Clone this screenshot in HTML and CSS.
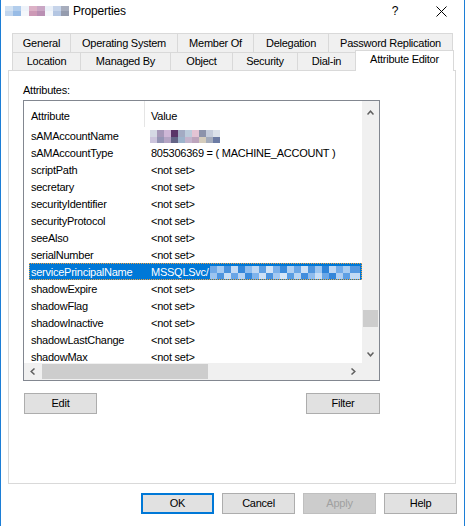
FILE: index.html
```html
<!DOCTYPE html>
<html>
<head>
<meta charset="utf-8">
<title>Properties</title>
<link rel="stylesheet" href="styles.css">
</head>
<body>
<div class="window">
  <div class="titlebar">
    <span class="title-blur"></span>
    <span class="title">Properties</span>
    <div class="tb-btns">
      <span class="tb-btn">?</span>
      <span class="tb-btn"><svg width="11" height="11" viewBox="0 0 11 11"><path d="M0.5 0.5 L10.5 10.5 M10.5 0.5 L0.5 10.5" stroke="#000" stroke-width="1" fill="none"/></svg></span>
    </div>
  </div>

  <div class="tabs">
    <div class="tab-row row1">
      <div class="tab t-general">General</div>
      <div class="tab t-os">Operating System</div>
      <div class="tab t-member">Member Of</div>
      <div class="tab t-deleg">Delegation</div>
      <div class="tab t-pwd">Password Replication</div>
    </div>
    <div class="tab-row row2">
      <div class="tab t-location">Location</div>
      <div class="tab t-managed">Managed By</div>
      <div class="tab t-object">Object</div>
      <div class="tab t-security">Security</div>
      <div class="tab t-dialin">Dial-in</div>
      <div class="tab t-attr selected">Attribute Editor</div>
    </div>
  </div>

  <div class="panel">
    <div class="label">Attributes:</div>
    <div class="listview">
      <div class="lv-main">
        <div class="lv-header">
          <div class="h1">Attribute</div>
          <div class="h2">Value</div>
        </div>
        <div class="lv-rows">
          <div class="lv-row"><span class="c1">sAMAccountName</span><span class="c2"><span class="blur-sam"></span></span></div>
          <div class="lv-row"><span class="c1">sAMAccountType</span><span class="c2">805306369 = ( MACHINE_ACCOUNT )</span></div>
          <div class="lv-row"><span class="c1">scriptPath</span><span class="c2">&lt;not set&gt;</span></div>
          <div class="lv-row"><span class="c1">secretary</span><span class="c2">&lt;not set&gt;</span></div>
          <div class="lv-row"><span class="c1">securityIdentifier</span><span class="c2">&lt;not set&gt;</span></div>
          <div class="lv-row"><span class="c1">securityProtocol</span><span class="c2">&lt;not set&gt;</span></div>
          <div class="lv-row"><span class="c1">seeAlso</span><span class="c2">&lt;not set&gt;</span></div>
          <div class="lv-row"><span class="c1">serialNumber</span><span class="c2">&lt;not set&gt;</span></div>
          <div class="lv-row selected"><span class="c1">servicePrincipalName</span><span class="c2">MSSQLSvc/<span class="blur-spn"></span></span></div>
          <div class="lv-row"><span class="c1">shadowExpire</span><span class="c2">&lt;not set&gt;</span></div>
          <div class="lv-row"><span class="c1">shadowFlag</span><span class="c2">&lt;not set&gt;</span></div>
          <div class="lv-row"><span class="c1">shadowInactive</span><span class="c2">&lt;not set&gt;</span></div>
          <div class="lv-row"><span class="c1">shadowLastChange</span><span class="c2">&lt;not set&gt;</span></div>
          <div class="lv-row"><span class="c1">shadowMax</span><span class="c2">&lt;not set&gt;</span></div>
        </div>
      </div>
      <div class="vscroll">
        <div class="sb-btn up"><svg width="7" height="5" viewBox="0 0 7 5"><polyline points="0.5,4.5 3.5,1.2 6.5,4.5" fill="none" stroke="#606060" stroke-width="1.5"/></svg></div>
        <div class="vtrack"><div class="vthumb"></div></div>
        <div class="sb-btn"><svg width="7" height="5" viewBox="0 0 7 5"><polyline points="0.5,0.5 3.5,3.8 6.5,0.5" fill="none" stroke="#606060" stroke-width="1.5"/></svg></div>
      </div>
      <div class="hscroll">
        <div class="sb-btn hbtn"><svg width="5" height="7" viewBox="0 0 5 7"><polyline points="4.5,0.5 1.2,3.5 4.5,6.5" fill="none" stroke="#606060" stroke-width="1.5"/></svg></div>
        <div class="htrack"><div class="hthumb"></div></div>
        <div class="sb-btn hbtn"><svg width="5" height="7" viewBox="0 0 5 7"><polyline points="0.5,0.5 3.8,3.5 0.5,6.5" fill="none" stroke="#606060" stroke-width="1.5"/></svg></div>
      </div>
      <div class="corner"></div>
    </div>
    <div class="panel-buttons">
      <button class="btn btn-edit">Edit</button>
      <button class="btn btn-filter">Filter</button>
    </div>
  </div>

  <div class="dialog-buttons">
    <button class="btn default">OK</button>
    <button class="btn">Cancel</button>
    <button class="btn disabled">Apply</button>
    <button class="btn">Help</button>
  </div>
</div>
</body>
</html>
```

FILE: styles.css
```css
html, body {
  margin: 0;
  padding: 0;
  background: #ffffff;
}

body {
  font-family: "Liberation Sans", Arial, sans-serif;
  font-size: 11px;
  letter-spacing: -0.25px;
  color: #000000;
}

.window {
  width: 465px;
  height: 526px;
  box-sizing: border-box;
  border-left: 1px solid #1c7ed6;
  border-right: 1px solid #1c7ed6;
  background: #ffffff;
  overflow: hidden;
}

/* ---------- title bar ---------- */
.titlebar {
  height: 33px;
  display: flex;
  align-items: flex-start;
}

.title-blur {
  margin: 6px 0 0 4px;
  width: 64px;
  height: 10px;
  flex-shrink: 0;
  background:
    linear-gradient(90deg, #d3e2f2 0 8px, #b2cdec 8px 16px, #eef3fa 16px 24px, #dcb1c6 24px 32px, #c9a6c4 32px 40px, #eaf0f8 40px 48px, #c6d4ea 48px 56px, #a7adbd 56px 64px) top / 100% 5px no-repeat,
    linear-gradient(90deg, #c2d6ee 0 8px, #98bce6 8px 16px, #f4f7fb 16px 24px, #cd99b6 24px 32px, #b98fb3 32px 40px, #f3f6fa 40px 48px, #b4c6e2 48px 56px, #959cae 56px 64px) bottom / 100% 5px no-repeat;
}

.title {
  margin-left: 4px;
  padding-top: 4px;
  font-size: 12px;
  line-height: 14px;
  letter-spacing: -0.2px;
  white-space: nowrap;
}

.tb-btns {
  margin-left: auto;
  display: flex;
}

.tb-btn {
  width: 46px;
  height: 22px;
  display: flex;
  align-items: center;
  justify-content: center;
  font-size: 12px;
  letter-spacing: 0;
}

/* ---------- tabs ---------- */
.tabs {
  margin-left: 11px;
}

.tab-row {
  display: flex;
  align-items: flex-start;
}

.tab {
  box-sizing: border-box;
  border: 1px solid #d9d9d9;
  border-bottom: none;
  background: #f0f0f0;
  text-align: center;
  white-space: nowrap;
  margin-left: -1px;
  line-height: 17px;
}

.tab:first-child {
  margin-left: 0;
}

.row1 .tab {
  height: 19px;
  padding-top: 1px;
}

.row2 .tab {
  height: 18px;
}

.row2 .tab.selected {
  height: 21px;
  margin-top: -2px;
  margin-bottom: -1px;
  background: #ffffff;
  position: relative;
  z-index: 1;
}

.t-general { width: 59px; }
.t-os { width: 108px; }
.t-member { width: 77px; }
.t-deleg { width: 76px; }
.t-pwd { width: 125px; }

.t-location { width: 69px; }
.t-managed { width: 91px; }
.t-object { width: 63px; }
.t-security { width: 66px; }
.t-dialin { width: 59px; }
.t-attr { width: 99px; }

/* ---------- panel ---------- */
.panel {
  margin-left: 7px;
  width: 448px;
  height: 414px;
  box-sizing: border-box;
  border: 1px solid #d9d9d9;
  background: #ffffff;
  padding: 13px 0 0 14px;
}

.label {
  line-height: 13px;
  height: 13px;
}

.listview {
  margin-top: 3px;
  width: 357px;
  height: 281px;
  box-sizing: border-box;
  border: 1px solid #828790;
  display: grid;
  grid-template-columns: 338px 17px;
  grid-template-rows: 262px 17px;
}

.lv-main {
  overflow: hidden;
  background: #ffffff;
}

.lv-header {
  height: 26px;
  display: flex;
}

.h1 {
  width: 121px;
  box-sizing: border-box;
  border-right: 1px solid #e5e5e5;
  padding: 9px 0 0 7px;
  line-height: 13px;
}

.h2 {
  padding: 9px 0 0 6px;
  line-height: 13px;
}

.lv-rows {
  padding-left: 5px;
}

.lv-row {
  width: 333px;
  height: 17px;
  box-sizing: border-box;
  padding: 1px 0 0 1px;
  display: flex;
  line-height: 16px;
  white-space: nowrap;
  overflow: hidden;
}

.lv-row .c1 {
  width: 119px;
  box-sizing: border-box;
  padding-left: 1px;
  flex-shrink: 0;
}

.lv-row .c2 {
  padding-left: 2px;
  display: flex;
  align-items: center;
}

.lv-row.selected {
  background: #0078d7;
  color: #ffffff;
  outline: 1px dotted #f0a040;
  outline-offset: -1px;
}

.blur-sam {
  display: block;
  width: 70px;
  height: 13px;
  margin-left: -1px;
  background:
    linear-gradient(90deg, #d4d8e4 0 7px, #a597b8 7px 14px, #cdb6d6 14px 21px, #5a3468 21px 28px, #a3abc3 28px 35px, #bccbdb 35px 42px, #e3c4d4 42px 49px, #8c93ab 49px 56px, #c4ccdb 56px 63px, #dbe2ea 63px 70px) top / 100% 7px no-repeat,
    linear-gradient(90deg, #ccc4dc 0 7px, #9494b4 7px 14px, #b4a4c4 14px 21px, #646486 21px 28px, #9db3cb 28px 35px, #c4b4cc 35px 42px, #bca4bc 42px 49px, #d4ccbc 49px 56px, #a4acbc 56px 63px, #6c7ca4 63px 70px) bottom / 100% 6px no-repeat;
}

.blur-spn {
  display: block;
  width: 150px;
  height: 13px;
  margin-left: 1px;
  flex-shrink: 0;
  background:
    linear-gradient(90deg, #6fa9e8 0 7px, #a6cbf2 7px 14px, #4a92dd 14px 21px, #c4dbf5 21px 28px, #3487da 28px 35px, #8fbdee 35px 42px, #bfd8f4 42px 49px, #5d9fe3 49px 56px, #d3e4f7 56px 63px, #7ab0ea 63px 70px, #3b8bdb 70px 77px, #b1d0f2 77px 84px, #6aa6e6 84px 91px, #cfe1f6 91px 98px, #4f95de 98px 105px, #9cc5f0 105px 112px, #2f84d9 112px 119px, #c0d8f4 119px 126px, #73ace9 126px 133px, #a9cdf2 133px 140px, #5598e0 140px 150px) top / 100% 7px no-repeat,
    linear-gradient(90deg, #9cc4f0 0 7px, #4f95de 7px 14px, #c8def5 14px 21px, #69a5e6 21px 28px, #b6d3f3 28px 35px, #3a8adb 35px 42px, #7fb3eb 42px 49px, #cde0f6 49px 56px, #4c93dd 56px 63px, #a4c9f1 63px 70px, #d6e6f8 70px 77px, #5a9de2 77px 84px, #b9d5f3 84px 91px, #438ddc 91px 98px, #8ebbed 98px 105px, #c7ddf5 105px 112px, #6ba7e7 112px 119px, #3385d9 119px 126px, #b0cff2 126px 133px, #5e9fe3 133px 140px, #c3daf4 140px 150px) bottom / 100% 6px no-repeat;
}

/* ---------- scrollbars ---------- */
.vscroll {
  background: #f0f0f0;
  display: flex;
  flex-direction: column;
}

.sb-btn {
  height: 17px;
  flex-shrink: 0;
  display: flex;
  align-items: center;
  justify-content: center;
}

.sb-btn svg {
  display: block;
}

.sb-btn.up {
  box-sizing: border-box;
  padding-top: 5px;
}

.vtrack {
  flex: 1;
}

.vthumb {
  margin: 192px 0 0 1px;
  width: 15px;
  height: 17px;
  background: #cdcdcd;
}

.hscroll {
  background: #f0f0f0;
  display: flex;
}

.hbtn {
  width: 17px;
}

.htrack {
  flex: 1;
}

.hthumb {
  margin: 1px 0 0 1px;
  width: 166px;
  height: 15px;
  background: #cdcdcd;
}

.corner {
  background: #f0f0f0;
}

/* ---------- buttons ---------- */
.btn {
  box-sizing: border-box;
  height: 21px;
  width: 73px;
  padding: 0;
  margin: 0;
  border: 1px solid #adadad;
  background: #e1e1e1;
  font-family: inherit;
  font-size: 11px;
  letter-spacing: -0.25px;
  color: #000000;
  text-align: center;
  line-height: 19px;
}

.panel-buttons {
  margin-top: 12px;
  width: 357px;
  display: flex;
  justify-content: space-between;
}

.btn-edit {
  margin-left: 1px;
}

.btn-filter {
  width: 74px;
}

.dialog-buttons {
  margin-top: 9px;
  padding-right: 7px;
  display: flex;
  justify-content: flex-end;
  gap: 8px;
}

.btn.default {
  border: 2px solid #0078d7;
  line-height: 17px;
}

.btn.disabled {
  background: #cccccc;
  border-color: #bfbfbf;
  color: #a0a0a0;
}
```
